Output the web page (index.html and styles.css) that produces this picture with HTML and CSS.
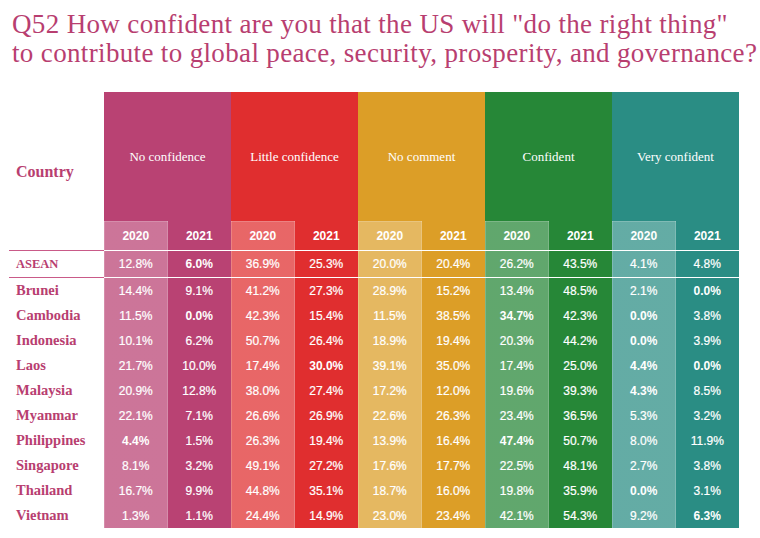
FILE: index.html
```html
<!DOCTYPE html>
<html>
<head>
<meta charset="utf-8">
<link rel="stylesheet" href="styles.css">
</head>
<body>
<h1 class="title">Q52 How confident are you that the US will "do the right thing"<br>to contribute to global peace, security, prosperity, and governance?</h1>
<div class="table">
  <div class="country-head">Country</div>
  <div class="cat c1">No confidence</div>
  <div class="cat c2">Little confidence</div>
  <div class="cat c3">No comment</div>
  <div class="cat c4">Confident</div>
  <div class="cat c5">Very confident</div>

  <div class="blank"></div>
  <div class="cell yr c1 y20">2020</div><div class="cell yr c1">2021</div>
  <div class="cell yr c2 y20">2020</div><div class="cell yr c2">2021</div>
  <div class="cell yr c3 y20">2020</div><div class="cell yr c3">2021</div>
  <div class="cell yr c4 y20">2020</div><div class="cell yr c4">2021</div>
  <div class="cell yr c5 y20">2020</div><div class="cell yr c5">2021</div>

  <div class="rule-l"></div><div class="rule"></div>

  <div class="name asean">ASEAN</div>
  <div class="cell c1 y20">12.8%</div><div class="cell c1 b">6.0%</div>
  <div class="cell c2 y20">36.9%</div><div class="cell c2">25.3%</div>
  <div class="cell c3 y20">20.0%</div><div class="cell c3">20.4%</div>
  <div class="cell c4 y20">26.2%</div><div class="cell c4">43.5%</div>
  <div class="cell c5 y20">4.1%</div><div class="cell c5">4.8%</div>

  <div class="rule-l"></div><div class="rule"></div>

  <div class="name">Brunei</div>
  <div class="cell c1 y20">14.4%</div><div class="cell c1">9.1%</div>
  <div class="cell c2 y20">41.2%</div><div class="cell c2">27.3%</div>
  <div class="cell c3 y20">28.9%</div><div class="cell c3">15.2%</div>
  <div class="cell c4 y20">13.4%</div><div class="cell c4">48.5%</div>
  <div class="cell c5 y20">2.1%</div><div class="cell c5 b">0.0%</div>

  <div class="name">Cambodia</div>
  <div class="cell c1 y20">11.5%</div><div class="cell c1 b">0.0%</div>
  <div class="cell c2 y20">42.3%</div><div class="cell c2">15.4%</div>
  <div class="cell c3 y20">11.5%</div><div class="cell c3">38.5%</div>
  <div class="cell c4 y20 b">34.7%</div><div class="cell c4">42.3%</div>
  <div class="cell c5 y20 b">0.0%</div><div class="cell c5">3.8%</div>

  <div class="name">Indonesia</div>
  <div class="cell c1 y20">10.1%</div><div class="cell c1">6.2%</div>
  <div class="cell c2 y20">50.7%</div><div class="cell c2">26.4%</div>
  <div class="cell c3 y20">18.9%</div><div class="cell c3">19.4%</div>
  <div class="cell c4 y20">20.3%</div><div class="cell c4">44.2%</div>
  <div class="cell c5 y20 b">0.0%</div><div class="cell c5">3.9%</div>

  <div class="name">Laos</div>
  <div class="cell c1 y20">21.7%</div><div class="cell c1">10.0%</div>
  <div class="cell c2 y20">17.4%</div><div class="cell c2 b">30.0%</div>
  <div class="cell c3 y20">39.1%</div><div class="cell c3">35.0%</div>
  <div class="cell c4 y20">17.4%</div><div class="cell c4">25.0%</div>
  <div class="cell c5 y20 b">4.4%</div><div class="cell c5 b">0.0%</div>

  <div class="name">Malaysia</div>
  <div class="cell c1 y20">20.9%</div><div class="cell c1">12.8%</div>
  <div class="cell c2 y20">38.0%</div><div class="cell c2">27.4%</div>
  <div class="cell c3 y20">17.2%</div><div class="cell c3">12.0%</div>
  <div class="cell c4 y20">19.6%</div><div class="cell c4">39.3%</div>
  <div class="cell c5 y20 b">4.3%</div><div class="cell c5">8.5%</div>

  <div class="name">Myanmar</div>
  <div class="cell c1 y20">22.1%</div><div class="cell c1">7.1%</div>
  <div class="cell c2 y20">26.6%</div><div class="cell c2">26.9%</div>
  <div class="cell c3 y20">22.6%</div><div class="cell c3">26.3%</div>
  <div class="cell c4 y20">23.4%</div><div class="cell c4">36.5%</div>
  <div class="cell c5 y20">5.3%</div><div class="cell c5">3.2%</div>

  <div class="name">Philippines</div>
  <div class="cell c1 y20 b">4.4%</div><div class="cell c1">1.5%</div>
  <div class="cell c2 y20">26.3%</div><div class="cell c2">19.4%</div>
  <div class="cell c3 y20">13.9%</div><div class="cell c3">16.4%</div>
  <div class="cell c4 y20 b">47.4%</div><div class="cell c4">50.7%</div>
  <div class="cell c5 y20">8.0%</div><div class="cell c5">11.9%</div>

  <div class="name">Singapore</div>
  <div class="cell c1 y20">8.1%</div><div class="cell c1">3.2%</div>
  <div class="cell c2 y20">49.1%</div><div class="cell c2">27.2%</div>
  <div class="cell c3 y20">17.6%</div><div class="cell c3">17.7%</div>
  <div class="cell c4 y20">22.5%</div><div class="cell c4">48.1%</div>
  <div class="cell c5 y20">2.7%</div><div class="cell c5">3.8%</div>

  <div class="name">Thailand</div>
  <div class="cell c1 y20">16.7%</div><div class="cell c1">9.9%</div>
  <div class="cell c2 y20">44.8%</div><div class="cell c2">35.1%</div>
  <div class="cell c3 y20">18.7%</div><div class="cell c3">16.0%</div>
  <div class="cell c4 y20">19.8%</div><div class="cell c4">35.9%</div>
  <div class="cell c5 y20 b">0.0%</div><div class="cell c5">3.1%</div>

  <div class="name">Vietnam</div>
  <div class="cell c1 y20">1.3%</div><div class="cell c1">1.1%</div>
  <div class="cell c2 y20">24.4%</div><div class="cell c2">14.9%</div>
  <div class="cell c3 y20">23.0%</div><div class="cell c3">23.4%</div>
  <div class="cell c4 y20">42.1%</div><div class="cell c4">54.3%</div>
  <div class="cell c5 y20">9.2%</div><div class="cell c5 b">6.3%</div>
</div>
</body>
</html>
```
FILE: styles.css
```css
body {
  margin: 0;
  background: #ffffff;
  font-family: "Liberation Serif", serif;
}

.title {
  margin: 0;
  padding: 10px 0 0 12px;
  font-size: 27px;
  line-height: 29px;
  letter-spacing: 0.35px;
  font-weight: normal;
  color: #b83e70;
}

.table {
  margin-top: 24px;
  display: grid;
  grid-template-columns: 104px repeat(10, 63.5px);
  grid-template-rows: 129px 29px 1px 26px 1px repeat(10, 25px);
}

.country-head {
  display: flex;
  align-items: center;
  padding: 30px 0 0 16px;
  font-size: 16px;
  font-weight: bold;
  color: #b83e70;
}

.cat {
  grid-column: span 2;
  display: flex;
  align-items: center;
  justify-content: center;
  color: #ffffff;
  font-size: 13px;
}

.c1 { background-color: #b94273; }
.c2 { background-color: #e02e2f; }
.c3 { background-color: #dc9e27; }
.c4 { background-color: #268737; }
.c5 { background-color: #2a8d84; }

.cell {
  display: flex;
  align-items: center;
  justify-content: center;
  color: #ffffff;
  font-family: "Liberation Sans", sans-serif;
  font-size: 12px;
  -webkit-text-stroke: 0.2px #ffffff;
}

.yr {
  font-weight: bold;
  -webkit-text-stroke: 0;
}

.b {
  font-weight: bold;
  -webkit-text-stroke: 0;
}

.y20 {
  background-image: linear-gradient(rgba(255, 255, 255, 0.27), rgba(255, 255, 255, 0.27));
  box-shadow: inset 1px 0 rgba(255, 255, 255, 0.18), inset -1px 0 rgba(255, 255, 255, 0.18);
}

.yr.y20 {
  box-shadow: inset 1px 0 rgba(255, 255, 255, 0.18), inset -1px 0 rgba(255, 255, 255, 0.18), inset 0 1px rgba(255, 255, 255, 0.18);
}

.rule-l {
  margin-left: 9px;
  background: #c95a88;
}

.rule {
  grid-column: span 10;
  background: #ffffff;
}

.name {
  display: flex;
  align-items: center;
  padding-left: 16px;
  font-size: 14.5px;
  font-weight: bold;
  color: #b83e70;
}

.name.asean {
  font-size: 12.5px;
}
```
